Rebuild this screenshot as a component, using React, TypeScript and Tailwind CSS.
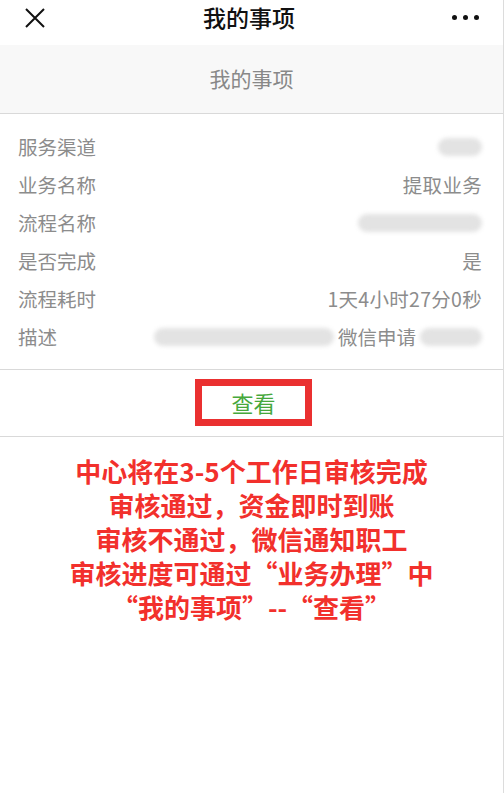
import React from "react";

const rows: { label: string; value?: string; kind?: string }[] = [
  { label: "服务渠道", kind: "blurShort" },
  { label: "业务名称", value: "提取业务" },
  { label: "流程名称", kind: "blurLong" },
  { label: "是否完成", value: "是" },
  { label: "流程耗时", value: "1天4小时27分0秒" },
  { label: "描述", kind: "desc" },
];

function Blur({ w }: { w: string }) {
  return <div className={`h-[18px] rounded-full bg-[#e3e3e3] blur-[2px] ${w}`} />;
}

function RowValue({ kind, value }: { kind?: string; value?: string }) {
  if (kind === "blurShort") return <Blur w="w-[44px]" />;
  if (kind === "blurLong") return <Blur w="w-[124px]" />;
  if (kind === "desc")
    return (
      <div className="flex items-center gap-[4px]">
        <Blur w="w-[180px]" />
        <span className="text-[19.5px] text-[#8c8c8c]">微信申请</span>
        <Blur w="w-[62px]" />
      </div>
    );
  return <span className="text-[19.5px] text-[#8c8c8c] tracking-[0.3px]">{value}</span>;
}

export default function App() {
  return (
    <div
      className="w-[504px] h-[793px] bg-white border-r border-[#dcdcdc]"
      style={{ fontFamily: '"Noto Sans CJK SC", "Noto Sans", sans-serif' }}
    >
      <div className="h-[45px] flex items-center justify-between px-[24px]">
        <svg width="22" height="22" viewBox="0 0 22 22" className="mt-[-9px]">
          <path d="M2 2 L20 20 M20 2 L2 20" stroke="#111" strokeWidth="2" />
        </svg>
        <span className="text-[23px] font-medium text-[#111] mt-[-11px]">我的事项</span>
        <div className="flex gap-[6px] mt-[-10px]">
          <span className="w-[5px] h-[5px] rounded-full bg-[#111]" />
          <span className="w-[5px] h-[5px] rounded-full bg-[#111]" />
          <span className="w-[5px] h-[5px] rounded-full bg-[#111]" />
        </div>
      </div>
      <div className="h-[69px] bg-[#f8f8f8] border-b border-[#d9d9d9] flex items-center justify-center">
        <span className="text-[21px] text-[#888]">我的事项</span>
      </div>
      <div className="pt-[14px] pb-[13px] px-[18px] pr-[21px] border-b border-[#d9d9d9]">
        {rows.map((r) => (
          <div key={r.label} className="h-[38px] flex items-center justify-between">
            <span className="text-[19.5px] text-[#8c8c8c]">{r.label}</span>
            <RowValue kind={r.kind} value={r.value} />
          </div>
        ))}
      </div>
      <div className="h-[67px] border-b border-[#d9d9d9] flex items-center justify-center">
        <div className="w-[117px] h-[47px] border-[7px] border-[#ea3030] flex items-center justify-center ml-[4px] mt-[-2px]">
          <span className="text-[22px] text-[#46a83c]">查看</span>
        </div>
      </div>
      <div className="pt-[17px] text-center text-[26px] leading-[34px] font-bold text-[#f2302c]">
        <p>中心将在3-5个工作日审核完成</p>
        <p>审核通过，资金即时到账</p>
        <p>审核不通过，微信通知职工</p>
        <p>审核进度可通过“业务办理”中</p>
        <p>“我的事项”--“查看”</p>
      </div>
    </div>
  );
}
